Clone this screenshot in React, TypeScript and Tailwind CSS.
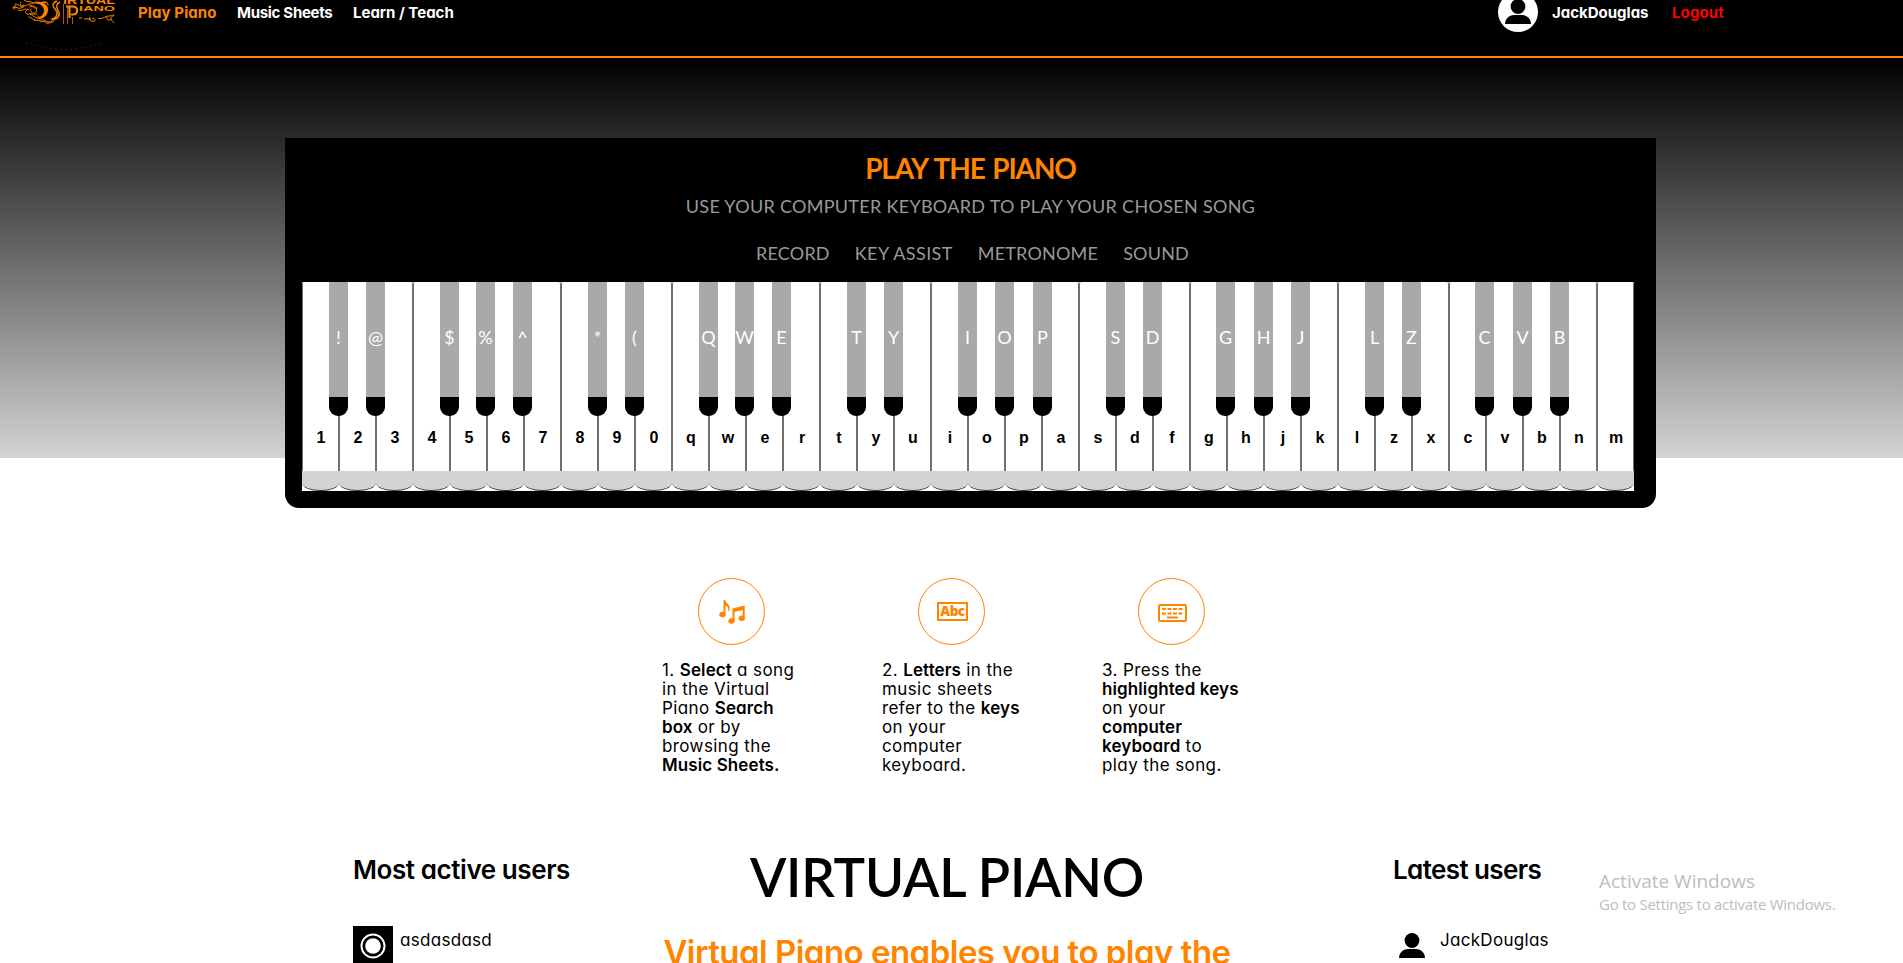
import type { ReactNode } from "react";

const rounded = "font-['Inter','Liberation_Sans',sans-serif] [font-feature-settings:'cv11']";
const caps = "font-['Lato','Liberation_Sans',sans-serif]";

type Key = { label: string; sharp?: string; shift?: number };

const keys: Key[] = [
  { label: "1", sharp: "!" }, { label: "2", sharp: "@" }, { label: "3" },
  { label: "4", sharp: "$" }, { label: "5", sharp: "%", shift: -1 }, { label: "6", sharp: "^", shift: -1 }, { label: "7" },
  { label: "8", sharp: "*" }, { label: "9", sharp: "(" }, { label: "0" },
  { label: "q", sharp: "Q" }, { label: "w", sharp: "W", shift: -1 }, { label: "e", sharp: "E", shift: -1 }, { label: "r" },
  { label: "t", sharp: "T" }, { label: "y", sharp: "Y" }, { label: "u" },
  { label: "i", sharp: "I" }, { label: "o", sharp: "O" }, { label: "p", sharp: "P", shift: 1 }, { label: "a" },
  { label: "s", sharp: "S" }, { label: "d", sharp: "D" }, { label: "f" },
  { label: "g", sharp: "G", shift: -1 }, { label: "h", sharp: "H" }, { label: "j", sharp: "J" }, { label: "k" },
  { label: "l", sharp: "L" }, { label: "z", sharp: "Z" }, { label: "x" },
  { label: "c", sharp: "C", shift: -1 }, { label: "v", sharp: "V" }, { label: "b", sharp: "B" }, { label: "n" }, { label: "m" },
];

function PianoKey({ label, sharp, shift = 0 }: Key) {
  const left = shift === -1 ? "left-[26px]" : shift === 1 ? "left-[28px]" : "left-[27px]";
  return (
    <div className="relative flex h-[209px] w-[37px] flex-col">
      <div className="flex h-[189px] items-end justify-center rounded-t-[2px] border-x border-[#707070] pb-[23px] pl-px font-['Liberation_Sans',Arial,sans-serif] text-base leading-5 font-bold">
        {label}
      </div>
      <div className="h-5 bg-[linear-gradient(#d3d3d3_12px,#fff_12px)]">
        <div className="h-5 border-b border-[#333] bg-[#d3d3d3] [border-radius:0_0_50%_50%/0_0_8px_8px]" />
      </div>
      {sharp && (
        <div className={`absolute top-0 z-10 flex h-[134px] w-[19px] flex-col overflow-hidden rounded-b-[9px] bg-black ${left}`}>
          <div className={`flex h-[115px] justify-center bg-[#a9a9a9] pt-[45px] text-lg leading-5 text-white ${caps}`}>{sharp}</div>
        </div>
      )}
    </div>
  );
}

function Logo() {
  return (
    <svg className="h-14 w-[125px] shrink-0" viewBox="0 0 125 56" fill="none" stroke="#ff8400">
      <g strokeWidth="1" strokeLinecap="round">
        <path d="M13 8c3-2 5 1 8 0s5-4 9-3 3 4 7 3M15 4c4 0 5 3 8 3M18 10c4 2 7-3 11 0M16 6c-3-1-4 3-1 3M21 2c-2 2 0 5 3 3M27 10c-3 2-1 5 2 4s5 1 8 0" />
        <path d="M24 0c3 3 7 0 9 3M30 14c4 2 6 5 11 4s7-5 4-8M34 20c4 2 8-2 12 1M40 22c4-2 8 2 12-1M46 23c3 1 6-1 8-2M36 2c4 3 9-2 12 2" />
        <path d="M30 7c5-3 8 2 6 5s-7 0-5-3M51 19c3 3 6-1 5-3M41 3c3-3 7-1 7 2M38 16c2 3 5 2 6 0M29 17c3 0 3 3 6 3" />
      </g>
      <path d="M29 4c8-4 18-2 19 5 0 6-5 10-11 9 5-1 8-5 7-9-1-5-8-7-15-5z" fill="#ff8400" strokeWidth=".4" />
      <path d="M57 1c-5 2-5 5-2 8 4 4 2 9-3 10M60 2c-4 2-4 5-2 8 3 5 0 9-4 9" strokeWidth="1.400" />
      <path d="M63.500 4v20M67.500 6v18M72.500 17v7" strokeWidth=".7" />
      <path d="M66 6.500h7c5.500 0 5.500 8 0 8h-2M69.500 6v12" strokeWidth="2.200" />
      <path d="M79 18h3M84 19c3-1 5 1 7 0M90 17c-2 3 1 5 4 4s-1-4-2-2M98 18c4 2 7-2 11-2s5-2 5-1-4 2-3 4 3 3 3 4M107 17c-1 3 2 4 5 2" strokeWidth="1" />
      <path d="M26 42q37 15 77 0" stroke="#242424" strokeDasharray="2 3" />
      <g fill="#ff8400" stroke="none" fontFamily="Liberation Sans, sans-serif" fontWeight="700">
        <text x="63" y="3.800" fontSize="10" textLength="52" lengthAdjust="spacingAndGlyphs">IRTUAL</text>
        <text x="79" y="11" fontSize="6.500" textLength="36" lengthAdjust="spacingAndGlyphs">IANO</text>
      </g>
    </svg>
  );
}

function Person({ className }: { className: string }) {
  return (
    <svg className={className} viewBox="0 0 40 40" fill="#000">
      <circle cx="20" cy="14.500" r="7.400" />
      <path d="M7 32c0-5 4-9 9-9h8c5 0 9 4 9 9z" />
    </svg>
  );
}

function NotesIcon() {
  return (
    <svg className="size-[65px]" viewBox="0 0 65 65" fill="#ff8400">
      <ellipse cx="23.500" cy="35.500" rx="3.200" ry="2.700" />
      <path d="M24.500 21h1.800c.4 3.600 5.700 4.500 4.300 9.500-.3 1-1 1.800-2 2 1.700-3 .5-5-2.200-6V36h-1.900z" />
      <path d="M33.500 29.500 45.700 26.500V39.500h-2V31l-8.200 2v9.500h-2z" />
      <ellipse cx="32.500" cy="42" rx="3.100" ry="2.700" />
      <ellipse cx="42.700" cy="39.200" rx="3.100" ry="2.700" />
    </svg>
  );
}

function LettersIcon() {
  return (
    <span className="ml-[2px] flex h-[19px] w-[31px] items-center justify-center border-2 border-[#ff8400] font-['Open_Sans',sans-serif] text-[13.5px] leading-[15px] font-extrabold tracking-[-0.5px]">
      Abc
    </span>
  );
}

function KeyboardIcon() {
  return (
    <svg className="mt-[3px] ml-[2px] h-[18px] w-[29px]" viewBox="0 0 29 18" fill="none" stroke="#ff8400" strokeWidth="2">
      <rect x="1" y="1" width="27" height="16" rx="1" />
      <path d="M4 5h4m1.500 0h4m1.500 0h4m1.500 0h4M4 9.500h4m1.500 0h4m1.500 0h4m1.500 0h4M9 13.500h11" />
    </svg>
  );
}

function Step({ icon, children }: { icon: ReactNode; children: ReactNode }) {
  return (
    <div className="flex w-[220px] flex-col">
      <div className="ml-[37px] flex size-[67px] items-center justify-center rounded-full border border-[#ff8400] text-[#ff8400]">{icon}</div>
      <p className={`mt-4 ml-px text-[17px] leading-[19px] tracking-[0.4px] whitespace-nowrap [&_b]:font-semibold [&_b]:tracking-[0.1px] ${rounded}`}>{children}</p>
    </div>
  );
}

export default function App() {
  return (
    <div className={`relative flex h-[963px] w-[1903px] flex-col overflow-hidden bg-white text-black ${rounded}`}>
      <header className="flex h-[58px] shrink-0 items-start border-b-2 border-[#ff8400] bg-black text-[15px] leading-5 font-bold text-white">
        <Logo />
        <nav className="ml-[13px] flex gap-5 pt-[3px] whitespace-nowrap">
          <a className="w-[79px] tracking-[0.1px] text-[#ff8400]">Play Piano</a>
          <a className="w-24 tracking-[-0.3px]">Music Sheets</a>
          <a>Learn / Teach</a>
        </nav>
        <div className="ml-auto flex w-[405px] items-start pt-[3px]">
          <span className="-mt-[11px] mr-[14px] size-10 shrink-0 rounded-full bg-white">
            <Person className="size-10" />
          </span>
          <a className="w-[120px]">JackDouglas</a>
          <a className="tracking-[0.1px] text-[#f00]">Logout</a>
        </div>
      </header>

      <main className="flex flex-col bg-[linear-gradient(#000,#d3d3d3)] bg-[length:100%_400px] bg-no-repeat pt-20">
        <section className={`ml-[285px] flex h-[370px] w-[1371px] flex-col items-center rounded-b-[14px] bg-black pt-4 whitespace-nowrap text-[#999] ${caps}`}>
          <h2 className="text-[28px] leading-7 font-bold tracking-[-1.15px] text-[#ff8400] [word-spacing:2px]">PLAY THE PIANO</h2>
          <p className="mt-3 text-lg leading-6 tracking-[0.3px]">USE YOUR COMPUTER KEYBOARD TO PLAY YOUR CHOSEN SONG</p>
          <div className="mt-[23px] flex gap-[25px] pl-1 text-lg leading-6 tracking-[0.2px]">
            <span>RECORD</span>
            <span className="tracking-[0.4px]">KEY ASSIST</span>
            <span>METRONOME</span>
            <span>SOUND</span>
          </div>
          <div className="mt-[17px] ml-[17px] flex self-start bg-white text-black">
            {keys.map((k) => (
              <PianoKey key={k.label} {...k} />
            ))}
          </div>
        </section>

        <section className="mt-[70px] ml-[661px] flex">
          <Step icon={<NotesIcon />}>
            1. <b>Select</b> a song<br />in the Virtual<br />Piano <b>Search</b><br /><b>box</b> or by<br />browsing the<br /><b>Music Sheets.</b>
          </Step>
          <Step icon={<LettersIcon />}>
            2. <b>Letters</b> in the<br />music sheets<br />refer to the <b>keys</b><br />on your<br />computer<br />keyboard.
          </Step>
          <Step icon={<KeyboardIcon />}>
            3. Press the<br /><b>highlighted keys</b><br />on your<br /><b>computer</b><br /><b>keyboard</b> to<br />play the song.
          </Step>
        </section>

        <section className="mt-[79px] ml-[353px] flex whitespace-nowrap">
          <div className="w-[230px]">
            <h3 className="pt-px text-[26px] leading-[30px] font-semibold tracking-[-0.42px]">Most active users</h3>
            <div className="mt-[41px] flex">
              <svg className="size-10" viewBox="0 0 40 40">
                <path d="M0 0h40v40H0z" />
                <circle cx="20" cy="20" r="11.500" fill="none" stroke="#fff" strokeWidth="2" />
                <circle cx="20" cy="20" r="7.800" fill="#fff" />
              </svg>
              <span className="ml-[7px] pt-1 text-[17px] leading-5 tracking-[0.3px]">asdasdasd</span>
            </div>
          </div>
          <div className="flex w-[728px] flex-col items-center">
            <h1 className={`text-[53px] leading-[46px] font-semibold tracking-[-0.2px] ${caps}`}>VIRTUAL PIANO</h1>
            <h2 className="mt-8 text-[33px] leading-[40px] font-semibold tracking-[-0.52px] text-[#ff8400]">Virtual Piano enables you to play the</h2>
          </div>
          <div className="ml-[82px]">
            <h3 className="pt-px text-[26px] leading-[30px] font-semibold tracking-[-0.6px]">Latest users</h3>
            <div className="mt-[41px] flex">
              <Person className="-ml-px size-10" />
              <span className="ml-2 pt-1 text-[17px] leading-5 tracking-[0.3px]">JackDouglas</span>
            </div>
          </div>
        </section>
      </main>

      <aside className="absolute top-[867px] left-[1599px] font-['Open_Sans',sans-serif] whitespace-nowrap text-[#bdbdbd]">
        <p className="text-[19px] leading-7">Activate Windows</p>
        <p className="text-[15px] leading-[18px] tracking-[-0.27px]">Go to Settings to activate Windows.</p>
      </aside>
    </div>
  );
}
